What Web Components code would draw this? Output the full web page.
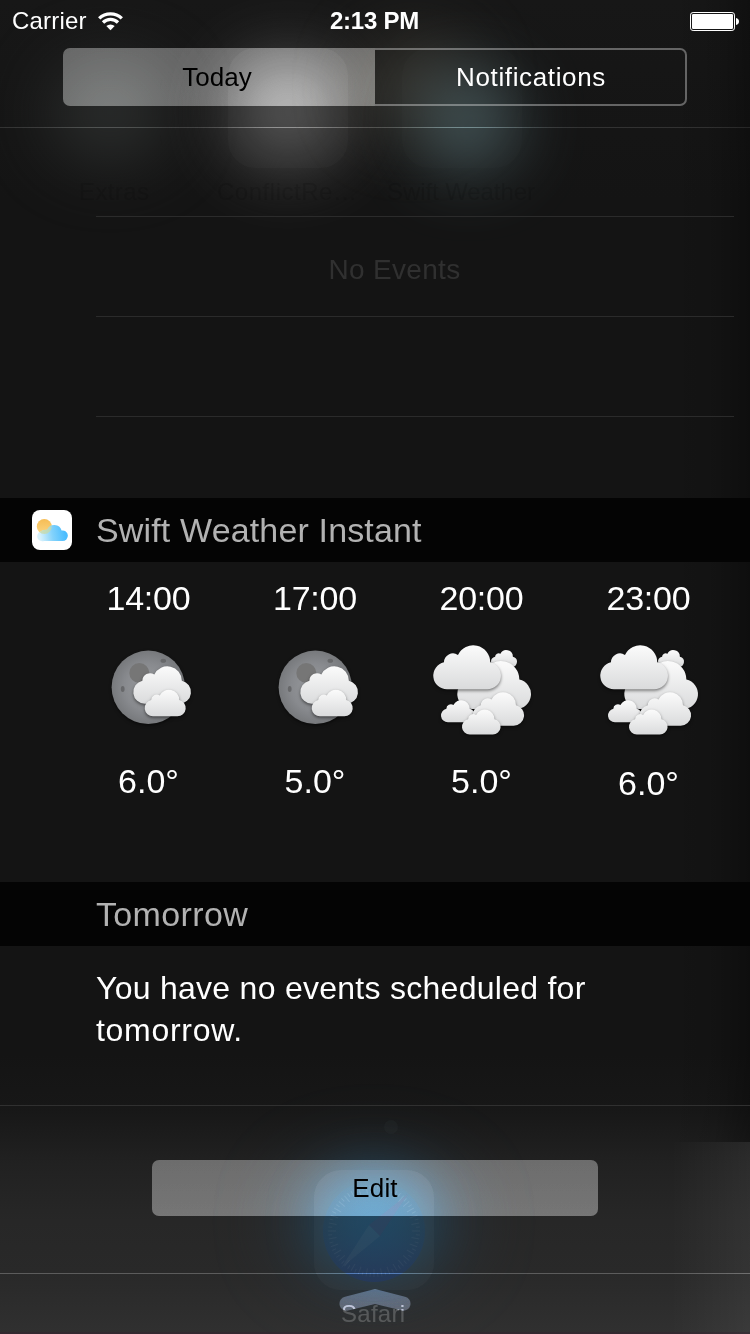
<!DOCTYPE html>
<html lang="en">
<head>
<meta charset="utf-8">
<title>Notification Center</title>
<style>
html,body{margin:0;background:#141414}
body{width:750px;height:1334px;overflow:hidden;font-family:"Liberation Sans",Arial,sans-serif;color:#fff}
</style>
</head>
<body>
<notification-center></notification-center>
<script>
const define=(name,html)=>customElements.define(name,class extends HTMLElement{
  constructor(){super();const t=document.createElement('template');
    t.innerHTML=typeof html==='function'?html(this):html;
    this.attachShadow({mode:'open'}).append(t.content.cloneNode(true));}
});

let ticks='';
for(let i=0;i<72;i++)ticks+=`<path d="M374 1185v${i%2?4:8}" transform="rotate(${i*5} 374 1231)"/>`;

define('home-backdrop',`<style>:host{display:block;width:750px;height:1334px}svg{display:block}</style>
<svg width="750" height="1334" viewBox="0 0 750 1334" font-family="Liberation Sans,Arial,sans-serif" font-size="24">
<defs>
<linearGradient id="base" gradientUnits="userSpaceOnUse" x1="0" y1="0" x2="0" y2="1334">
<stop offset="0" stop-color="#171717"/><stop offset=".15" stop-color="#141414"/><stop offset=".79" stop-color="#141414"/><stop offset=".83" stop-color="#171717"/><stop offset=".872" stop-color="#212121"/><stop offset=".915" stop-color="#272727"/><stop offset=".955" stop-color="#292929"/><stop offset="1" stop-color="#303030"/></linearGradient>
<linearGradient id="rd"><stop offset="0" stop-color="#000" stop-opacity="0"/><stop offset=".55" stop-color="#000" stop-opacity=".08"/><stop offset="1" stop-color="#000" stop-opacity=".3"/></linearGradient>
<linearGradient id="rl"><stop offset="0" stop-color="#fff" stop-opacity="0"/><stop offset="1" stop-color="#fff" stop-opacity=".05"/></linearGradient>
<linearGradient id="dial" x2="0" y2="1"><stop stop-color="#1c4668" stop-opacity=".1"/><stop offset=".5" stop-color="#1c4060" stop-opacity=".4"/><stop offset="1" stop-color="#223868" stop-opacity=".6"/></linearGradient>
<filter id="b" x="-200%" y="-200%" width="500%" height="500%" color-interpolation-filters="sRGB"><feGaussianBlur stdDeviation="34"/></filter>
<filter id="b2" x="-200%" y="-200%" width="500%" height="500%" color-interpolation-filters="sRGB"><feGaussianBlur stdDeviation="27"/></filter>
</defs>
<rect width="750" height="1334" fill="url(#base)"/>
<rect x="670" y="0" width="80" height="1142" fill="url(#rd)"/>
<rect x="670" y="1142" width="80" height="192" fill="url(#rl)"/>
<ellipse cx="110" cy="112" rx="60" ry="50" fill="#363938" opacity=".7" filter="url(#b)"/>
<ellipse cx="288" cy="112" rx="60" ry="56" fill="#585858" opacity=".95" filter="url(#b)"/>
<ellipse cx="415" cy="85" rx="55" ry="48" fill="#423f37" opacity=".7" filter="url(#b)"/>
<ellipse cx="468" cy="122" rx="48" ry="50" fill="#4a5f63" opacity=".85" filter="url(#b)"/>
<g fill="#fff"><rect x="54" y="48" width="120" height="120" rx="27" opacity=".005"/><rect x="228" y="48" width="120" height="120" rx="27" opacity=".02"/><rect x="402" y="48" width="120" height="120" rx="27" opacity=".01"/></g>
<g fill="#000" opacity=".12"><text x="79" y="200" textLength="70">Extras</text><text x="217" y="200" textLength="140">ConflictRe…</text><text x="387" y="200" textLength="148">Swift Weather</text></g>
<circle cx="391" cy="1127" r="7" fill="#2a2e30" opacity=".28"/>
<ellipse cx="374" cy="1222" rx="92" ry="66" fill="#2c3e4c" opacity=".6" filter="url(#b)"/>
<ellipse cx="374" cy="1222" rx="54" ry="48" fill="#1b4b68" opacity=".85" filter="url(#b2)"/>
<rect x="314" y="1170" width="120" height="120" rx="27" fill="#fff" opacity=".028"/>
<circle cx="374" cy="1231" r="51" fill="url(#dial)"/>
<g stroke="#74808c" stroke-width="1" opacity=".12">${ticks}</g>
<path d="M341 1268L369 1225L380 1236Z" fill="#647078" opacity=".12"/><path d="M408 1194L369 1225L380 1236Z" fill="#5a2c50" opacity=".15"/>
<text x="341" y="1322" textLength="64" fill="#fff" opacity=".2">Safari</text>
<rect y="1332" width="750" height="2" fill="#3a1c30" opacity=".35"/>
</svg>`);

define('vibrant-sheet',`<style>:host{display:grid}i{grid-area:1/1;border-radius:inherit}
.d{background:var(--dodge,#808080);mix-blend-mode:color-dodge}.w{isolation:isolate;background:rgba(255,255,255,var(--lift,.26))}</style><i class="d"></i><i class="w"></i>`);

define('status-bar',`<style>:host{display:grid;grid-template-columns:1fr auto 1fr;align-items:center;height:40px;padding:2px 11px 0 12px;box-sizing:border-box;font-size:24px}
.l{display:flex;align-items:center;gap:11px}.t{font-weight:700;letter-spacing:-.25px;padding-right:2px}.r{justify-self:end}svg{display:block}.l span{letter-spacing:.2px}</style>
<div class="l"><span>Carrier</span><svg width="25" height="19" viewBox="0 0 25 19"><g fill="none" stroke="#fff" stroke-width="3.3"><path d="M1.2 6.4A16.2 16.2 0 0 1 23.8 6.4"/><path d="M5 10.5A10.7 10.7 0 0 1 20 10.5"/></g><path d="M8.300 14A6.400 6.400 0 0 1 16.700 14L12.500 18.300Z" fill="#fff"/></svg></div>
<span class="t">2:13 PM</span>
<svg class="r" width="49" height="19" viewBox="0 0 49 19"><rect x=".5" y=".5" width="44" height="18" rx="2.6" fill="none" stroke="#fff"/><rect x="2" y="2" width="41" height="15" rx="1.3" fill="#fff"/><path d="M46 6c2 .5 3 1.8 3 3.5S48 12.500 46 13Z" fill="#fff"/></svg>`);

define('segment-control',`<style>:host{display:grid;grid-template-columns:312px 312px;width:624px;height:58px;margin:8px 0 0 63px;font-size:26px}
.c{display:grid}.c>*{grid-area:1/1}.c span{place-self:center;padding-top:1px;isolation:isolate}
.a vibrant-sheet{border-radius:7px 0 0 7px}.a span{color:#000;padding-right:4px}
.b span{letter-spacing:.63px}.o{border:2px solid rgba(255,255,255,.34);border-left:0;border-radius:0 7px 7px 0}</style>
<div class="c a"><vibrant-sheet></vibrant-sheet><span>Today</span></div>
<div class="c b"><div class="o"></div><span>Notifications</span></div>`);

define('hair-line',`<style>:host{display:block;height:1px;background:#2b2b2b}</style>`);

define('section-head',`<style>:host{display:grid;grid-template-columns:40px 1fr;column-gap:24px;align-items:center;height:64px;padding-left:32px;background:#040404;color:#b2b2b2;font-size:34px;letter-spacing:.15px}
.t{grid-column:2;grid-row:1;padding-top:1px}.i{grid-column:1;grid-row:1}</style><div class="i"><slot name="icon"></slot></div><div class="t"><slot></slot></div>`);

define('weather-app-icon',`<style>:host,svg{display:block}</style><svg width="40" height="40" viewBox="0 0 40 40"><defs><linearGradient id="s" x2="0" y2="1"><stop stop-color="#f6bd55"/><stop offset="1" stop-color="#fbd580"/></linearGradient><linearGradient id="c" gradientUnits="userSpaceOnUse" x1="8" y1="26" x2="33" y2="22"><stop stop-color="#d7f1fc"/><stop offset=".5" stop-color="#82d2fb"/><stop offset="1" stop-color="#4bbdff"/></linearGradient><clipPath id="cl"><circle cx="12.3" cy="16.5" r="7.5"/></clipPath></defs><rect width="40" height="40" rx="8" fill="#fff"/><circle cx="12.3" cy="16.500" r="7.5" fill="url(#s)"/><path d="M12 31A5 5 0 0 1 8.500 21.500Q10.500 19.500 15.200 19.800A7.600 7.600 0 0 1 29.600 20.500A5.300 5.300 0 1 1 30.300 31Z" fill="url(#c)"/><path d="M12 31A5 5 0 0 1 8.500 21.500Q10.500 19.500 15.200 19.800A7.600 7.600 0 0 1 29 21V31Z" fill="#c9d9a6" opacity=".75" clip-path="url(#cl)"/></svg>`);

const cloud=(x,y,s)=>`<g filter="url(#sh)"><g transform="translate(${x} ${y}) scale(${s})" fill="url(#cg)"><path d="M41 133A41 41 0 0 1 32 52A27 27 0 0 1 74 30A51 51 0 0 1 171 52A41 41 0 0 1 162 133Z"/></g></g>`;
const art={
 moon:`<g filter="url(#sh)"><circle cx="60.300" cy="57.300" r="36.700" fill="url(#mg)"/></g><g fill="#767676"><circle cx="51.300" cy="43" r="10"/><ellipse cx="75.300" cy="30.700" rx="2.800" ry="2" fill="#67686a"/><ellipse cx="34.700" cy="59" rx="1.900" ry="3" fill="#67686a"/></g>${cloud(45.3,36,.284)}${cloud(56.7,59.5,.202)}`,
 clouds:cloud(70,20,.128)+cloud(36.3,30.7,.363)+cloud(20,70,.168)+cloud(51.7,62,.253)+cloud(41,79.3,.19)+cloud(12.3,15,.333)
};
define('forecast-slot',el=>`<style>:host{display:grid;grid-template-rows:68px 120px 1fr;justify-items:center;height:320px;font-size:34px}
.h{padding-top:17px;letter-spacing:-.2px;padding-left:1px}svg{display:block}.d{padding-top:var(--drop,12px);padding-left:1px}</style>
<div class="h"><slot></slot></div><svg width="120" height="120" viewBox="0 0 120 120"><defs>
<linearGradient id="cg" x2="0" y2="1"><stop stop-color="#fbfbfb"/><stop offset="1" stop-color="#dadbdc"/></linearGradient>
<radialGradient id="mg"><stop stop-color="#9b9da0"/><stop offset=".65" stop-color="#888a8e"/><stop offset="1" stop-color="#77797c"/></radialGradient>
<filter id="sh" x="-20%" y="-20%" width="140%" height="150%" color-interpolation-filters="sRGB"><feDropShadow dx="0" dy="1.500" stdDeviation="1.600" flood-color="#000" flood-opacity=".5"/></filter></defs>${art[el.getAttribute('sky')]}</svg><div class="d"><slot name="temp"></slot></div>`);

define('today-list',`<style>:host{display:block;height:977px}.r{height:99px}.r,.ev{display:grid;place-items:center}
.lines{padding:88px 16px 0 96px;height:282px}.ev{height:99px;color:#303030;font-size:28px;letter-spacing:.3px;padding-right:41px;padding-top:7px;box-sizing:border-box}
.f{display:grid;grid-template-columns:166px 167px 166px 168px;padding-left:65px;height:320px}.late{--drop:14px}
p{margin:0;padding:21px 96px 0;font-size:32px;line-height:42px;letter-spacing:.27px}p span{letter-spacing:.7px}.tm{letter-spacing:.35px}</style>
<div class="lines"><hair-line></hair-line><div class="ev">No Events</div><hair-line></hair-line><div class="r"></div><hair-line></hair-line></div>
<section-head><weather-app-icon slot="icon"></weather-app-icon>Swift Weather Instant</section-head>
<div class="f"></div>
<section-head class="tm">Tomorrow</section-head>
<p>You have no events scheduled for <span>tomorrow.</span></p>`);

define('drawer-footer',`<style>:host{display:grid;grid-template-rows:1px 54px 56px 57px 1px 60px;width:750px}
.top{grid-row:1;background:#303030}.e{grid-row:3;margin:0 152px;display:grid}.e>*{grid-area:1/1}.e vibrant-sheet{border-radius:7px;--lift:.23}.e span{place-self:center;color:#000;font-size:26px;letter-spacing:.2px;padding-top:1px;isolation:isolate}
.l{grid-row:5;--lift:.06}.g{grid-row:6;justify-self:center;display:grid;mix-blend-mode:color-dodge;margin-top:15px}svg{display:block}</style>
<div class="top"></div><div class="e"><vibrant-sheet></vibrant-sheet><span>Edit</span></div><vibrant-sheet class="l"></vibrant-sheet>
<div class="g"><svg width="72" height="22" viewBox="0 0 72 22"><path d="M6 7.800L36 0L66 7.800A7 7 0 0 1 63 21.500L36 15L9 21.500A7 7 0 0 1 6 7.800Z" fill="#8c8c94"/></svg></div>`);

customElements.define('notification-center',class extends HTMLElement{
 constructor(){super();const r=this.attachShadow({mode:'open'});
 r.innerHTML=`<style>:host{display:grid;width:750px;height:1334px}home-backdrop,main{grid-area:1/1}main{display:grid;grid-template-rows:127px 1px 977px 229px}.l{--lift:.04;--dodge:#808080}</style>
<home-backdrop></home-backdrop><main><header><status-bar></status-bar><segment-control></segment-control></header><vibrant-sheet class="l"></vibrant-sheet><today-list></today-list><drawer-footer></drawer-footer></main>`;
 const f=r.querySelector('today-list').shadowRoot.querySelector('.f');
 f.innerHTML=[['14:00','moon','6.0°'],['17:00','moon','5.0°'],['20:00','clouds','5.0°'],['23:00','clouds','6.0°']].map((v,i)=>`<forecast-slot sky="${v[1]}"${i===3?' class="late"':''}>${v[0]}<span slot="temp">${v[2]}</span></forecast-slot>`).join('');
 }
});
</script>
</body>
</html>
